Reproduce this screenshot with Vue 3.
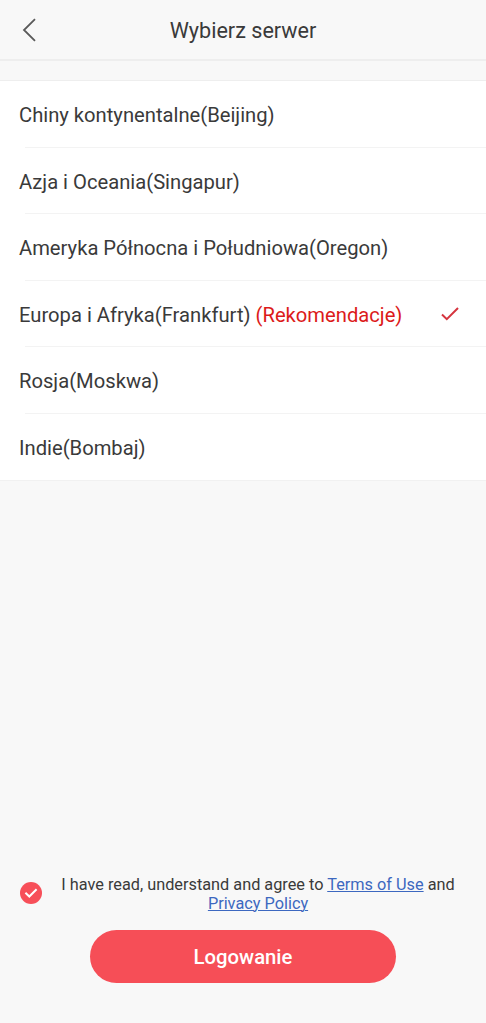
<script setup>
const servers = [
  { name: 'Chiny kontynentalne(Beijing)' },
  { name: 'Azja i Oceania(Singapur)' },
  { name: 'Ameryka Północna i Południowa(Oregon)' },
  { name: 'Europa i Afryka(Frankfurt)', note: '(Rekomendacje)', selected: true },
  { name: 'Rosja(Moskwa)' },
  { name: 'Indie(Bombaj)' },
]
</script>

<template>
  <div class="screen">
    <header class="bar">
      <svg class="back" width="16" height="26" viewBox="0 0 16 26"><path d="M14 2.2 L3 13 L14 23.8" /></svg>
      <h1>Wybierz serwer</h1>
    </header>
    <ul class="list">
      <li v-for="s in servers" :key="s.name">
        <span class="name">{{ s.name }} <em v-if="s.note">{{ s.note }}</em></span>
        <svg v-if="s.selected" class="tick" width="20" height="16" viewBox="0 0 20 16"><path d="M2 8.5 L6.8 13.2 L18 2" /></svg>
      </li>
    </ul>
    <footer class="foot">
      <div class="agree">
        <svg class="check" width="22" height="22" viewBox="0 0 22 22"><circle cx="11" cy="11" r="11" /><path d="M5.4 10.8 L9.3 14.5 L16.6 7.2" /></svg>
        <p>I have read, understand and agree to <a>Terms of Use</a> and<br /><a>Privacy Policy</a></p>
      </div>
      <button>Logowanie</button>
    </footer>
  </div>
</template>

<style>
body { margin: 0; background: #f8f8f8; }
</style>

<style scoped>
.screen { height: 1023px; display: flex; flex-direction: column; background: #f8f8f8; font-family: Roboto, sans-serif; color: #3a3a3a; overflow: hidden; }
.bar { height: 61px; box-sizing: border-box; border-bottom: 2px solid #eeeeee; display: grid; grid-template-columns: 60px 1fr 60px; align-items: center; flex: none; }
.back { margin-left: 21px; margin-top: 1px; fill: none; stroke: #5a5a5a; stroke-width: 1.8; }
h1 { margin: 2px 0 0; font-size: 21.6px; font-weight: 400; text-align: center; line-height: 24px; }
.list { list-style: none; margin: 19px 0 0; padding: 0; background: #fff; border-top: 1px solid #eeeeee; border-bottom: 1px solid #f1f1f1; flex: none; }
li { height: 66.5px; box-sizing: border-box; display: flex; align-items: center; justify-content: space-between; padding: 2px 26px 0 19px; font-size: 20.2px; background: linear-gradient(#f3f3f3, #f3f3f3) 25px 100% / 100% 1px no-repeat; }
li:last-child { background: none; }
.name { white-space: nowrap; }
em { font-style: normal; color: #dc1a1a; }
.tick { margin-top: -2px; fill: none; stroke: #d5343e; stroke-width: 2; }
.foot { margin-top: auto; padding-bottom: 40px; display: flex; flex-direction: column; align-items: center; }
.agree { align-self: stretch; display: flex; align-items: center; padding: 0 20px; }
.check { flex: none; margin-top: -2px; fill: #f74f59; }
.check path { fill: none; stroke: #fff; stroke-width: 2; }
p { margin: 0 0 0 19px; width: 394px; text-align: center; font-size: 16.3px; line-height: 19px; white-space: nowrap; }
a { color: #3d68c0; text-decoration: underline; text-decoration-thickness: 1px; }
button { margin-top: 17px; width: 306px; height: 53px; border: 0; border-radius: 27px; background: #f64e57; color: #fff; font: 500 20.3px Roboto, sans-serif; padding: 1px 0 0; }
</style>
